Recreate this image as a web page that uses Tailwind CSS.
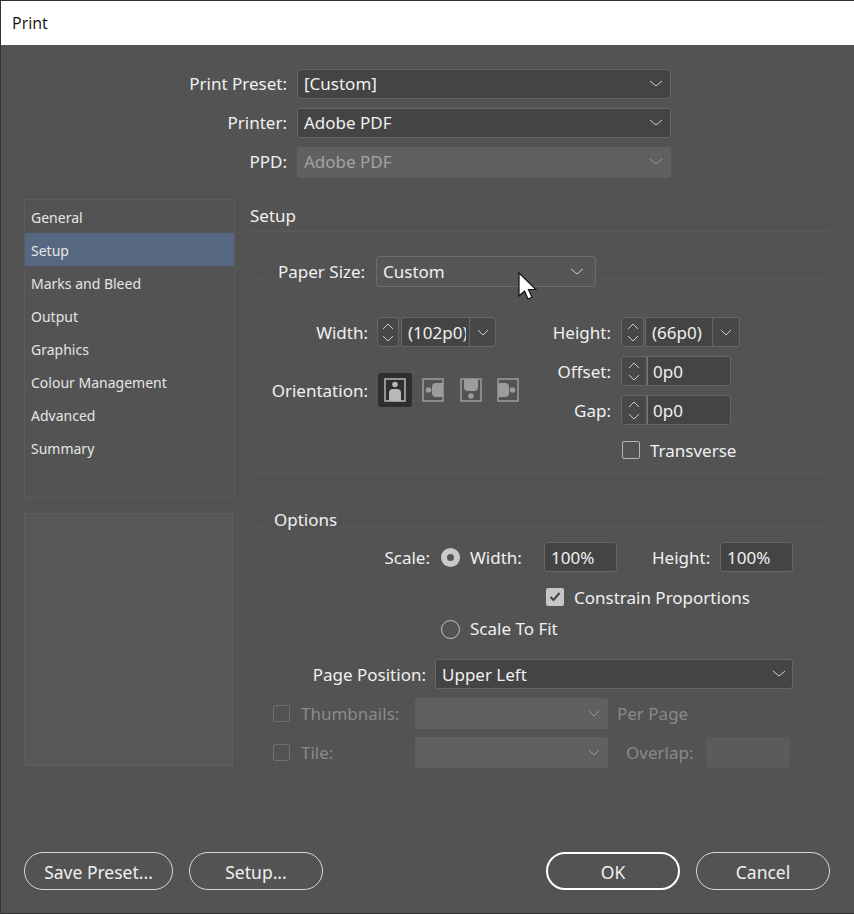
<!DOCTYPE html>
<html lang="en">
<head>
  <meta charset="UTF-8">
  <title>Print</title>
  <script src="https://cdn.jsdelivr.net/npm/@tailwindcss/browser@4"></script>
</head>
<body class="bg-[#535353]">
<div class="relative w-[854px] h-[914px] overflow-hidden bg-[#535353] border-l border-t border-b border-[#333] text-[#f0f0f0] text-[17px] font-['Noto_Sans',sans-serif]">

  <!-- Title bar -->
  <div class="h-[44px] bg-white text-[#111] flex items-center pl-[11px] text-[16px] font-['Open_Sans',sans-serif]">Print</div>

  <!-- Preset rows -->
  <div class="pt-[24px] flex flex-col gap-[9px]">
    <div class="flex items-center h-[30px]">
      <div class="w-[286px] text-right">Print Preset:</div>
      <div class="ml-[10px] w-[374px] h-[30px] flex items-center justify-between px-[6px] rounded-[3px] border border-[#666] bg-[#444]">
        <span>[Custom]</span>
        <svg width="14" height="8" viewBox="0 0 14 8" class="mr-[1px]"><path d="M1 1l6 5 6-5" fill="none" stroke="#d0d0d0" stroke-width="1"/></svg>
      </div>
    </div>
    <div class="flex items-center h-[30px]">
      <div class="w-[286px] text-right">Printer:</div>
      <div class="ml-[10px] w-[374px] h-[30px] flex items-center justify-between px-[6px] rounded-[3px] border border-[#666] bg-[#444]">
        <span>Adobe PDF</span>
        <svg width="14" height="8" viewBox="0 0 14 8" class="mr-[1px]"><path d="M1 1l6 5 6-5" fill="none" stroke="#d0d0d0" stroke-width="1"/></svg>
      </div>
    </div>
    <div class="flex items-center h-[30px]">
      <div class="w-[286px] text-right">PPD:</div>
      <div class="ml-[10px] w-[374px] h-[31px] flex items-center justify-between px-[7px] rounded-[3px] bg-[#606060] text-[#a3a3a3]">
        <span>Adobe PDF</span>
        <svg width="14" height="8" viewBox="0 0 14 8" class="mr-[1px]"><path d="M1 1l6 5 6-5" fill="none" stroke="#999" stroke-width="1"/></svg>
      </div>
    </div>
  </div>

  <div class="mt-[22px] flex">
    <!-- Left column -->
    <div class="ml-[23px] w-[211px] text-[14px] text-[#e6e6e6]">
      <div class="h-[299px] border border-[#5c5c5c]">
        <div class="h-[33px] flex items-center pl-[6px] pt-[1px]">General</div>
        <div class="h-[33px] flex items-center pl-[6px] pt-[1px] bg-[#566781]">Setup</div>
        <div class="h-[33px] flex items-center pl-[6px] pt-[1px]">Marks and Bleed</div>
        <div class="h-[33px] flex items-center pl-[6px] pt-[1px]">Output</div>
        <div class="h-[33px] flex items-center pl-[6px] pt-[1px]">Graphics</div>
        <div class="h-[33px] flex items-center pl-[6px] pt-[1px]">Colour Management</div>
        <div class="h-[33px] flex items-center pl-[6px] pt-[1px]">Advanced</div>
        <div class="h-[33px] flex items-center pl-[6px] pt-[1px]">Summary</div>
      </div>
      <div class="mt-[15px] w-[209px] h-[253px] bg-[#575757] border border-[#5e5e5e]"></div>
    </div>

    <!-- Right column -->
    <div class="ml-[14px] w-[582px]">
      <div class="h-[33px] border-b border-[#5a5a5a] text-[#f0f0f0] pt-[4px] pl-[1px]">Setup</div>

      <!-- Paper size group -->
      <div class="relative mt-[24px] ml-[1px] w-[580px]">
        <div class="relative z-10 flex items-center h-[31px] w-fit ml-[17px] pl-[11px] bg-[#535353]">
          <span class="w-[90px] whitespace-nowrap">Paper Size:</span>
          <div class="ml-[8px] w-[220px] h-[31px] flex items-center justify-between px-[6px] rounded-[3px] border border-[#6c6c6c] bg-[#565656]">
            <span>Custom</span>
            <svg width="14" height="8" viewBox="0 0 14 8" class="mr-[5px]"><path d="M1 1l6 5 6-5" fill="none" stroke="#d0d0d0" stroke-width="1"/></svg>
          </div>
        </div>
        <div class="-mt-[15px] h-[208px] border border-[#4d4d4d] rounded-[3px] flex pt-[44px]">
          <!-- Width and orientation -->
          <div class="w-[270px]">
            <div class="flex items-center h-[30px]">
              <div class="w-[117px] text-right pt-[2px]">Width:</div>
              <div class="ml-[9px] w-[22px] h-[30px] flex flex-col items-center justify-center gap-[5px] rounded-l-[3px] border border-[#666] bg-[#484848]">
                <svg width="12" height="7" viewBox="0 0 12 7"><path d="M1 6l5-5 5 5" fill="none" stroke="#ccc"/></svg>
                <svg width="12" height="7" viewBox="0 0 12 7"><path d="M1 1l5 5 5-5" fill="none" stroke="#ccc"/></svg>
              </div>
              <div class="ml-[2px] w-[68px] h-[30px] flex items-center pl-[6px] pt-[2px] border border-[#666] border-r-0 rounded-l-[2px] bg-[#444]">
                <span class="w-[58px] overflow-hidden whitespace-nowrap">(102p0)</span>
              </div>
              <div class="w-[27px] h-[30px] flex items-center justify-center border border-[#666] rounded-r-[3px] bg-[#484848]">
                <svg width="12" height="7" viewBox="0 0 12 7"><path d="M1 1l5 5 5-5" fill="none" stroke="#ccc"/></svg>
              </div>
            </div>
            <div class="flex items-center h-[35px] mt-[25px]">
              <div class="w-[117px] text-right pt-[2px]">Orientation:</div>
              <div class="ml-[10px] w-[34px] h-[34px] rounded-[3px] bg-[#2f2f2f] flex items-center justify-center">
                <svg width="22" height="24" viewBox="0 0 22 24"><rect x="1" y="1" width="20" height="22" fill="none" stroke="#b8b8b8" stroke-width="1.5"/><circle cx="11" cy="6.500" r="2.800" fill="#b8b8b8"/><path d="M5 23v-8q0-4 4-4h4q4 0 4 4v8z" fill="#b8b8b8"/></svg>
              </div>
              <div class="ml-[10px] w-[22px] h-[24px]">
                <svg width="22" height="24" viewBox="0 0 22 24"><rect x="1" y="1" width="20" height="22" fill="none" stroke="#9c9c9c" stroke-width="1.5"/><circle cx="6.500" cy="12" r="2.800" fill="#9c9c9c"/><path d="M21 5h-7q-4 0-4 4v6q0 4 4 4h7z" fill="#9c9c9c"/></svg>
              </div>
              <div class="ml-[16px] w-[22px] h-[24px]">
                <svg width="22" height="24" viewBox="0 0 22 24"><rect x="1" y="1" width="20" height="22" fill="none" stroke="#9c9c9c" stroke-width="1.5"/><circle cx="11" cy="18" r="2.800" fill="#9c9c9c"/><path d="M4 1v8q0 4 4 4h6q4 0 4-4V1z" fill="#9c9c9c"/></svg>
              </div>
              <div class="ml-[15px] w-[22px] h-[24px]">
                <svg width="22" height="24" viewBox="0 0 22 24"><rect x="1" y="1" width="20" height="22" fill="none" stroke="#9c9c9c" stroke-width="1.5"/><circle cx="15.500" cy="12" r="2.800" fill="#9c9c9c"/><path d="M1 5h7q4 0 4 4v6q0 4-4 4H1z" fill="#9c9c9c"/></svg>
              </div>
            </div>
          </div>

          <!-- Height, offset, gap -->
          <div class="flex flex-col gap-[9px]">
            <div class="flex items-center h-[30px]">
              <div class="w-[90px] text-right pt-[2px]">Height:</div>
              <div class="ml-[10px] w-[23px] h-[30px] flex flex-col items-center justify-center gap-[5px] rounded-l-[3px] border border-[#666] bg-[#484848]">
                <svg width="12" height="7" viewBox="0 0 12 7"><path d="M1 6l5-5 5 5" fill="none" stroke="#ccc"/></svg>
                <svg width="12" height="7" viewBox="0 0 12 7"><path d="M1 1l5 5 5-5" fill="none" stroke="#ccc"/></svg>
              </div>
              <div class="ml-[1px] w-[68px] h-[30px] flex items-center pl-[6px] pt-[2px] border border-[#666] bg-[#444] whitespace-nowrap">(66p0)</div>
              <div class="w-[27px] h-[30px] flex items-center justify-center border border-l-0 border-[#666] rounded-r-[3px] bg-[#484848]">
                <svg width="12" height="7" viewBox="0 0 12 7"><path d="M1 1l5 5 5-5" fill="none" stroke="#ccc"/></svg>
              </div>
            </div>
            <div class="flex items-center h-[30px]">
              <div class="w-[90px] text-right pt-[2px]">Offset:</div>
              <div class="ml-[10px] w-[26px] h-[30px] flex flex-col items-center justify-center gap-[5px] rounded-l-[3px] border border-[#666] bg-[#484848]">
                <svg width="12" height="7" viewBox="0 0 12 7"><path d="M1 6l5-5 5 5" fill="none" stroke="#ccc"/></svg>
                <svg width="12" height="7" viewBox="0 0 12 7"><path d="M1 1l5 5 5-5" fill="none" stroke="#ccc"/></svg>
              </div>
              <div class="w-[84px] h-[30px] flex items-center pl-[5px] pt-[2px] border border-l-[#777] border-[#666] rounded-r-[3px] bg-[#444]">0p0</div>
            </div>
            <div class="flex items-center h-[30px]">
              <div class="w-[90px] text-right pt-[2px]">Gap:</div>
              <div class="ml-[10px] w-[26px] h-[30px] flex flex-col items-center justify-center gap-[5px] rounded-l-[3px] border border-[#666] bg-[#484848]">
                <svg width="12" height="7" viewBox="0 0 12 7"><path d="M1 6l5-5 5 5" fill="none" stroke="#ccc"/></svg>
                <svg width="12" height="7" viewBox="0 0 12 7"><path d="M1 1l5 5 5-5" fill="none" stroke="#ccc"/></svg>
              </div>
              <div class="w-[84px] h-[30px] flex items-center pl-[5px] pt-[2px] border border-l-[#777] border-[#666] rounded-r-[3px] bg-[#444]">0p0</div>
            </div>
            <div class="flex items-center h-[24px] mt-[4px]">
              <div class="ml-[101px] w-[18px] h-[18px] rounded-[2px] border border-[#b5b5b5]"></div>
              <span class="ml-[10px] pt-[2px]">Transverse</span>
            </div>
          </div>
        </div>
      </div>

      <!-- Options group -->
      <div class="relative mt-[40px] ml-[1px] w-[580px] h-[278px] border border-[#4d4d4d] rounded-[3px]">
        <div class="absolute -top-[13px] left-[15px] px-[8px] bg-[#535353] leading-[24px]">Options</div>

        <div class="flex items-center h-[30px] mt-[21px]">
          <div class="w-[179px] text-right pt-[2px]">Scale:</div>
          <div class="ml-[11px] w-[19px] h-[19px] rounded-full bg-[#c9c9c9] flex items-center justify-center">
            <div class="w-[7px] h-[7px] rounded-full bg-[#535353]"></div>
          </div>
          <span class="ml-[10px] w-[74px] pt-[2px]">Width:</span>
          <div class="w-[73px] h-[30px] flex items-center pl-[6px] pt-[2px] rounded-[3px] border border-[#666] bg-[#444]">100%</div>
          <span class="ml-[35px] w-[68px] pt-[2px]">Height:</span>
          <div class="w-[73px] h-[30px] flex items-center pl-[6px] pt-[2px] rounded-[3px] border border-[#666] bg-[#444]">100%</div>
        </div>
        <div class="flex items-center h-[24px] mt-[13px]">
          <div class="ml-[295px] w-[18px] h-[18px] rounded-[2px] bg-[#c6c6c6] flex items-center justify-center">
            <svg width="12" height="10" viewBox="0 0 12 10"><path d="M1.500 5l3 3 6-7" fill="none" stroke="#444" stroke-width="2"/></svg>
          </div>
          <span class="ml-[10px] pt-[2px]">Constrain Proportions</span>
        </div>
        <div class="flex items-center h-[24px] mt-[8px]">
          <div class="ml-[190px] w-[19px] h-[19px] rounded-full border border-[#c0c0c0]"></div>
          <span class="ml-[10px]">Scale To Fit</span>
        </div>
        <div class="flex items-center h-[30px] mt-[18px]">
          <div class="w-[175px] text-right pt-[2px]">Page Position:</div>
          <div class="ml-[9px] w-[358px] h-[30px] flex items-center justify-between px-[6px] rounded-[3px] border border-[#666] bg-[#444]">
            <span class="pt-[2px]">Upper Left</span>
            <svg width="14" height="8" viewBox="0 0 14 8"><path d="M1 1l6 5 6-5" fill="none" stroke="#d0d0d0" stroke-width="1"/></svg>
          </div>
        </div>
        <div class="flex items-center h-[31px] mt-[9px] text-[#8a8a8a]">
          <div class="ml-[22px] w-[17px] h-[17px] rounded-[2px] border border-[#6f6f6f]"></div>
          <span class="ml-[11px] w-[114px]">Thumbnails:</span>
          <div class="w-[193px] h-[31px] flex items-center justify-end pr-[8px] rounded-[3px] bg-[#606060]">
            <svg width="12" height="7" viewBox="0 0 12 7"><path d="M1 1l5 5 5-5" fill="none" stroke="#999"/></svg>
          </div>
          <span class="ml-[9px]">Per Page</span>
        </div>
        <div class="flex items-center h-[31px] mt-[8px] text-[#8a8a8a]">
          <div class="ml-[22px] w-[17px] h-[17px] rounded-[2px] border border-[#6f6f6f]"></div>
          <span class="ml-[11px] w-[114px]">Tile:</span>
          <div class="w-[193px] h-[31px] flex items-center justify-end pr-[8px] rounded-[3px] bg-[#606060]">
            <svg width="12" height="7" viewBox="0 0 12 7"><path d="M1 1l5 5 5-5" fill="none" stroke="#999"/></svg>
          </div>
          <span class="ml-[18px] w-[80px]">Overlap:</span>
          <div class="w-[84px] h-[31px] rounded-[2px] bg-[#5b5b5b]"></div>
        </div>
      </div>
    </div>
  </div>

  <!-- Footer buttons -->
  <div class="absolute left-[23px] top-[851px] w-[807px] flex items-center text-[17.500px]">
    <div class="w-[149px] h-[38px] pt-[3px] flex items-center justify-center rounded-full border border-[#d8d8d8]">Save Preset...</div>
    <div class="ml-[16px] w-[134px] h-[38px] pt-[3px] flex items-center justify-center rounded-full border border-[#d8d8d8]">Setup...</div>
    <div class="ml-[223px] w-[134px] h-[38px] pt-[3px] flex items-center justify-center rounded-full border-[2.500px] border-white">OK</div>
    <div class="ml-[16px] w-[134px] h-[38px] pt-[3px] flex items-center justify-center rounded-full border border-[#d8d8d8]">Cancel</div>
  </div>

  <!-- Mouse cursor -->
  <svg class="absolute left-[516px] top-[271px] z-20" width="20" height="30" viewBox="0 0 20 30"><path d="M2 1v23l5.500-5 3.500 8 4-1.800-3.500-7.700h7.500z" fill="#fff" stroke="#111" stroke-width="1.200"/></svg>
</div>
</body>
</html>
